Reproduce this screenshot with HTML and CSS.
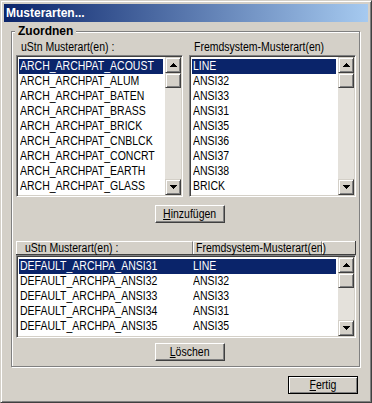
FILE: index.html
```html
<!DOCTYPE html>
<html lang="de">

<head>
    <meta charset="UTF-8">
    <title>Musterarten...</title>
    <link rel="stylesheet" href="styles.css">
</head>

<body>
    <div class="window">
        <!-- Caption -->
        <div class="titlebar">Musterarten...</div>

        <div class="client">
            <div class="group">
                <div class="group-label">Zuordnen</div>

                <!-- Two source lists -->
                <div class="pair">
                    <div class="col">
                        <div class="col-label"><span class="tx">uStn Musterart(en) :</span></div>
                        <div class="listbox">
                            <div class="items">
                                <div class="item sel"><span class="tx">ARCH_ARCHPAT_ACOUST</span></div>
                                <div class="item"><span class="tx">ARCH_ARCHPAT_ALUM</span></div>
                                <div class="item"><span class="tx">ARCH_ARCHPAT_BATEN</span></div>
                                <div class="item"><span class="tx">ARCH_ARCHPAT_BRASS</span></div>
                                <div class="item"><span class="tx">ARCH_ARCHPAT_BRICK</span></div>
                                <div class="item"><span class="tx">ARCH_ARCHPAT_CNBLCK</span></div>
                                <div class="item"><span class="tx">ARCH_ARCHPAT_CONCRT</span></div>
                                <div class="item"><span class="tx">ARCH_ARCHPAT_EARTH</span></div>
                                <div class="item"><span class="tx">ARCH_ARCHPAT_GLASS</span></div>
                            </div>
                            <div class="scrollbar">
                                <div class="sb-btn"><svg width="7" height="4" viewBox="0 0 7 4"><path d="M3 0h1v1h1v1h1v1h1v1H0V3h1V2h1V1h1z"/></svg></div>
                                <div class="sb-track"><div class="sb-thumb"></div></div>
                                <div class="sb-btn"><svg width="7" height="4" viewBox="0 0 7 4"><path d="M0 0h7v1H6v1H5v1H4v1H3V3H2V2H1V1H0z"/></svg></div>
                            </div>
                        </div>
                    </div>
                    <div class="col">
                        <div class="col-label"><span class="tx">Fremdsystem-Musterart(en)</span></div>
                        <div class="listbox">
                            <div class="items">
                                <div class="item sel"><span class="tx">LINE</span></div>
                                <div class="item"><span class="tx">ANSI32</span></div>
                                <div class="item"><span class="tx">ANSI33</span></div>
                                <div class="item"><span class="tx">ANSI31</span></div>
                                <div class="item"><span class="tx">ANSI35</span></div>
                                <div class="item"><span class="tx">ANSI36</span></div>
                                <div class="item"><span class="tx">ANSI37</span></div>
                                <div class="item"><span class="tx">ANSI38</span></div>
                                <div class="item"><span class="tx">BRICK</span></div>
                            </div>
                            <div class="scrollbar">
                                <div class="sb-btn"><svg width="7" height="4" viewBox="0 0 7 4"><path d="M3 0h1v1h1v1h1v1h1v1H0V3h1V2h1V1h1z"/></svg></div>
                                <div class="sb-track"><div class="sb-thumb"></div></div>
                                <div class="sb-btn"><svg width="7" height="4" viewBox="0 0 7 4"><path d="M0 0h7v1H6v1H5v1H4v1H3V3H2V2H1V1H0z"/></svg></div>
                            </div>
                        </div>
                    </div>
                </div>

                <div class="btn-row add-row">
                    <button class="btn"><span class="tx"><u>H</u>inzufügen</span></button>
                </div>

                <!-- Assigned pairs -->
                <div class="table-list">
                    <div class="header">
                        <div class="hcell h1"><span class="tx">uStn Musterart(en) :</span></div>
                        <div class="hcell h2"><span class="tx">Fremdsystem-Musterart(en)</span></div>
                        <div class="hfill"></div>
                    </div>
                    <div class="listbox low">
                        <div class="items">
                            <div class="item row sel"><span class="c1"><span class="tx">DEFAULT_ARCHPA_ANSI31</span></span><span class="tx">LINE</span></div>
                            <div class="item row"><span class="c1"><span class="tx">DEFAULT_ARCHPA_ANSI32</span></span><span class="tx">ANSI32</span></div>
                            <div class="item row"><span class="c1"><span class="tx">DEFAULT_ARCHPA_ANSI33</span></span><span class="tx">ANSI33</span></div>
                            <div class="item row"><span class="c1"><span class="tx">DEFAULT_ARCHPA_ANSI34</span></span><span class="tx">ANSI31</span></div>
                            <div class="item row"><span class="c1"><span class="tx">DEFAULT_ARCHPA_ANSI35</span></span><span class="tx">ANSI35</span></div>
                        </div>
                        <div class="scrollbar">
                            <div class="sb-btn"><svg width="7" height="4" viewBox="0 0 7 4"><path d="M3 0h1v1h1v1h1v1h1v1H0V3h1V2h1V1h1z"/></svg></div>
                            <div class="sb-track"><div class="sb-thumb"></div></div>
                            <div class="sb-btn"><svg width="7" height="4" viewBox="0 0 7 4"><path d="M0 0h7v1H6v1H5v1H4v1H3V3H2V2H1V1H0z"/></svg></div>
                        </div>
                    </div>
                </div>

                <div class="btn-row del-row">
                    <button class="btn"><span class="tx"><u>L</u>öschen</span></button>
                </div>
            </div>

            <div class="footer">
                <button class="btn default"><span class="tx"><u>F</u>ertig</span></button>
            </div>
        </div>
    </div>
</body>

</html>
```

FILE: styles.css
```css
/* Reset */
* {
    margin: 0;
    padding: 0;
    box-sizing: border-box;
}

body {
    background-color: #d4d0c8;
    font-family: "Liberation Sans", Arial, sans-serif;
    font-size: 12px;
    color: #000;
}

/* Narrow dialog font (no condensed face installed) */
.tx {
    display: inline-block;
    font-size: 12.5px;
    white-space: nowrap;
    transform: scaleX(0.84);
    transform-origin: 0 50%;
}

/* Dialog frame */
.window {
    width: 372px;
    height: 403px;
    padding: 3px;
    border: 1px solid;
    border-color: #d4d0c8 #404040 #404040 #d4d0c8;
    box-shadow: inset 1px 1px 0 #fff, inset -1px -1px 0 #808080;
    background-color: #d4d0c8;
}

.titlebar {
    height: 18px;
    padding-left: 2px;
    line-height: 18px;
    font-weight: bold;
    color: #fff;
    background: linear-gradient(to right, #0a246a, #a6caf0);
}

/* Group box */
.group {
    position: relative;
    height: 336px;
    margin: 9px 8px 0 7px;
    border: 1px solid #808080;
    box-shadow: inset 1px 1px 0 #fff, 1px 1px 0 #fff;
}

.group-label {
    position: absolute;
    top: -8px;
    left: 3px;
    padding: 0 3px;
    line-height: 14px;
    font-weight: bold;
    background-color: #d4d0c8;
}

.pair {
    display: flex;
    gap: 6px;
    margin-top: 7px;
    padding-left: 4px;
}

.col-label {
    height: 16px;
    line-height: 16px;
    padding-left: 5px;
}

/* Sunken list boxes */
.listbox {
    display: flex;
    width: 167px;
    height: 142px;
    padding: 1px;
    border: 1px solid;
    border-color: #808080 #fff #fff #808080;
    box-shadow: inset 1px 1px 0 #404040, inset -1px -1px 0 #d4d0c8;
    background-color: #fff;
}

.items {
    flex: 1;
    min-width: 0;
    padding: 2px 2px 0 1px;
    overflow: hidden;
}

.item {
    height: 15px;
    line-height: 15px;
    padding-left: 1px;
    white-space: nowrap;
}

.item.sel {
    background-color: #0a246a;
    color: #fff;
}

/* Scrollbar */
.scrollbar {
    display: flex;
    flex-direction: column;
    width: 16px;
    flex-shrink: 0;
}

.sb-btn,
.sb-thumb {
    border: 1px solid;
    border-color: #d4d0c8 #404040 #404040 #d4d0c8;
    box-shadow: inset 1px 1px 0 #fff, inset -1px -1px 0 #808080;
    background-color: #d4d0c8;
}

.sb-btn {
    display: flex;
    align-items: center;
    justify-content: center;
    height: 16px;
    flex-shrink: 0;
}

.sb-btn svg {
    shape-rendering: crispEdges;
    fill: #000;
}

.sb-track {
    flex: 1;
    background-color: #e4e1db;
}

.sb-thumb {
    height: 15px;
}

/* Push buttons */
.btn-row {
    display: flex;
}

.add-row {
    margin-top: 8px;
    padding-left: 143px;
}

.del-row {
    margin-top: 5px;
    padding-left: 143px;
}

.btn {
    width: 70px;
    height: 18px;
    font-family: inherit;
    font-size: 12px;
    line-height: 14px;
    color: #000;
    background-color: #d4d0c8;
    border: 1px solid;
    border-color: #fff #404040 #404040 #fff;
    box-shadow: inset -1px -1px 0 #808080;
}

.btn .tx {
    transform-origin: 50% 50%;
}

.btn.default {
    border-color: #000;
    box-shadow: inset 1px 1px 0 #fff, inset -1px -1px 0 #808080;
}

/* Assigned pairs list */
.table-list {
    width: 340px;
    margin: 18px 0 0 4px;
}

.header {
    display: flex;
    height: 14px;
    border-right: 1px solid #404040;
    border-bottom: 1px solid #404040;
}

.hcell,
.hfill {
    line-height: 12px;
    white-space: nowrap;
    border-top: 1px solid #fff;
    border-left: 1px solid #fff;
    border-right: 1px solid #808080;
}

.h1 {
    width: 177px;
    padding-left: 8px;
}

.h2 {
    width: 129px;
    padding-left: 2px;
}

.hfill {
    flex: 1;
    border-right: none;
}

.listbox.low {
    width: 340px;
    height: 83px;
}

.row {
    display: flex;
}

.c1 {
    width: 173px;
}

.footer {
    display: flex;
    justify-content: flex-end;
    margin-top: 9px;
    padding-right: 10px;
}
```
